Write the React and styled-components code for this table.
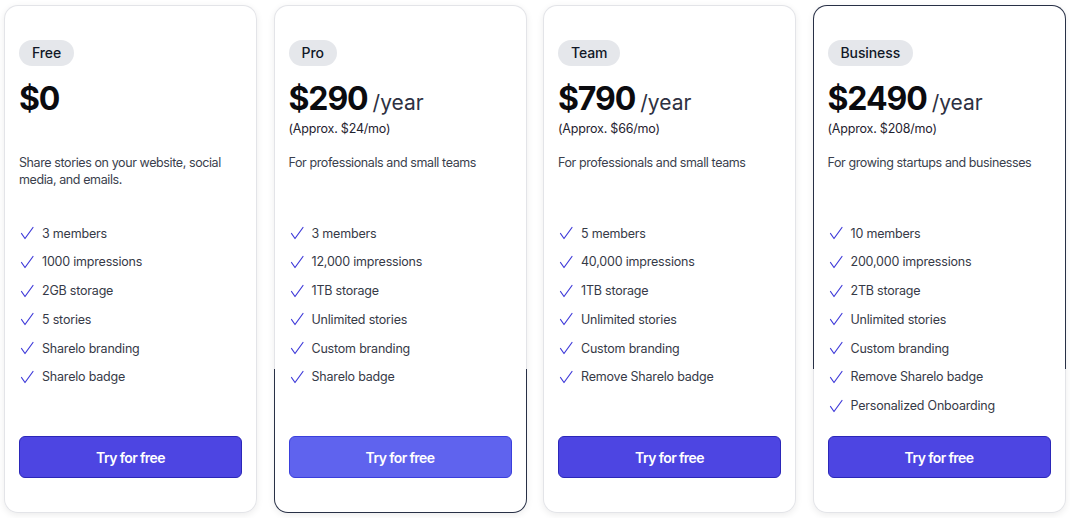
import React from "react";
import styled, { createGlobalStyle } from "styled-components";

const GlobalStyle = createGlobalStyle`
  html, body {
    margin: 0;
    padding: 0;
    background: #ffffff;
  }
  body {
    font-family: "Inter", "Liberation Sans", sans-serif;
    color: #111827;
  }
`;

const plans = [
  {
    name: "Free",
    price: "$0",
    approx: "",
    desc: "Share stories on your website, social media, and emails.",
    features: ["3 members", "1000 impressions", "2GB storage", "5 stories", "Sharelo branding", "Sharelo badge"],
  },
  {
    name: "Pro",
    price: "$290",
    period: "/year",
    approx: "(Approx. $24/mo)",
    desc: "For professionals and small teams",
    features: ["3 members", "12,000 impressions", "1TB storage", "Unlimited stories", "Custom branding", "Sharelo badge"],
    edge: "bottom",
    light: true,
  },
  {
    name: "Team",
    price: "$790",
    period: "/year",
    approx: "(Approx. $66/mo)",
    desc: "For professionals and small teams",
    features: ["5 members", "40,000 impressions", "1TB storage", "Unlimited stories", "Custom branding", "Remove Sharelo badge"],
  },
  {
    name: "Business",
    price: "$2490",
    period: "/year",
    approx: "(Approx. $208/mo)",
    desc: "For growing startups and businesses",
    features: [
      "10 members",
      "200,000 impressions",
      "2TB storage",
      "Unlimited stories",
      "Custom branding",
      "Remove Sharelo badge",
      "Personalized Onboarding",
    ],
    edge: "top",
  },
];

const Page = styled.div`
  box-sizing: border-box;
  height: 518px;
  padding: 5px 4px 5px 4px;
  display: grid;
  grid-template-columns: repeat(4, 253px);
  column-gap: 16.5px;
`;

// light/dark border split part way down the card
const borderFor = (edge) => {
  const light = "#e3e4e8";
  const dark = "#283046";
  if (edge === "bottom") return `linear-gradient(to bottom, ${light} 0 364px, ${dark} 364px)`;
  if (edge === "top") return `linear-gradient(to bottom, ${dark} 0 364px, ${light} 364px)`;
  return `linear-gradient(${light}, ${light})`;
};

const Card = styled.div`
  box-sizing: border-box;
  display: flex;
  flex-direction: column;
  padding: 34px 14px 34px 14px;
  border: 1px solid transparent;
  border-radius: 14px;
  background: linear-gradient(#fff, #fff) padding-box, ${({ $edge }) => borderFor($edge)} border-box;
  box-shadow: 0 2px 7px rgba(0, 0, 0, 0.08);
`;

const Badge = styled.span`
  align-self: flex-start;
  height: 26px;
  line-height: 26px;
  padding: 0 13px;
  border-radius: 13px;
  background: #e5e7eb;
  font-size: 14px;
  font-weight: 500;
  color: #111827;
  letter-spacing: -0.1px;
`;

const PriceRow = styled.div`
  margin-top: 13px;
  display: flex;
  align-items: baseline;
  gap: 5px;
  height: 40px;
`;

const Price = styled.span`
  font-size: 32px;
  font-weight: 700;
  letter-spacing: -1.1px;
  color: #0b0b0f;
`;

const Period = styled.span`
  font-size: 21px;
  font-weight: 400;
  color: #2d3142;
`;

const Approx = styled.div`
  height: 18px;
  margin-top: 1px;
  font-size: 12.5px;
  line-height: 18px;
  color: #1f2330;
  letter-spacing: -0.2px;
`;

const Desc = styled.p`
  margin: 16px 0 0;
  min-height: 36px;
  font-size: 12.5px;
  line-height: 17px;
  color: #3a3f4d;
  letter-spacing: -0.4px;
`;

const Features = styled.ul`
  list-style: none;
  margin: 34px 0 0;
  padding: 0;
  display: flex;
  flex-direction: column;
  gap: 10.8px;
`;

const Feature = styled.li`
  display: flex;
  align-items: center;
  gap: 8px;
  height: 18px;
  padding-left: 1px;
  font-size: 12.5px;
  color: #363a47;
  letter-spacing: -0.2px;
`;

const Button = styled.button`
  margin-top: auto;
  height: 42px;
  width: 100%;
  border-radius: 6px;
  border: 1px solid ${({ $light }) => ($light ? "#3a3fdc" : "#2b27b8")};
  background: ${({ $light }) => ($light ? "#5f63ee" : "#4d45e2")};
  color: #fff;
  font-family: inherit;
  font-size: 14px;
  font-weight: 600;
  letter-spacing: -0.6px;
  cursor: pointer;
`;

const CheckIcon = () => (
  <svg width="14" height="14" viewBox="0 0 14 14" fill="none" stroke="#3f3ad9" strokeWidth="1.2" strokeLinecap="round" strokeLinejoin="round">
    <path d="M1.5 7.5 5 12.5 13 1.5" />
  </svg>
);

export default function App() {
  return (
    <>
      <GlobalStyle />
      <Page>
        {plans.map((p) => (
          <Card key={p.name} $edge={p.edge}>
            <Badge>{p.name}</Badge>
            <PriceRow>
              <Price>{p.price}</Price>
              {p.period && <Period>{p.period}</Period>}
            </PriceRow>
            <Approx>{p.approx}</Approx>
            <Desc>{p.desc}</Desc>
            <Features>
              {p.features.map((f) => (
                <Feature key={f}>
                  <CheckIcon />
                  {f}
                </Feature>
              ))}
            </Features>
            <Button $light={p.light}>Try for free</Button>
          </Card>
        ))}
      </Page>
    </>
  );
}
